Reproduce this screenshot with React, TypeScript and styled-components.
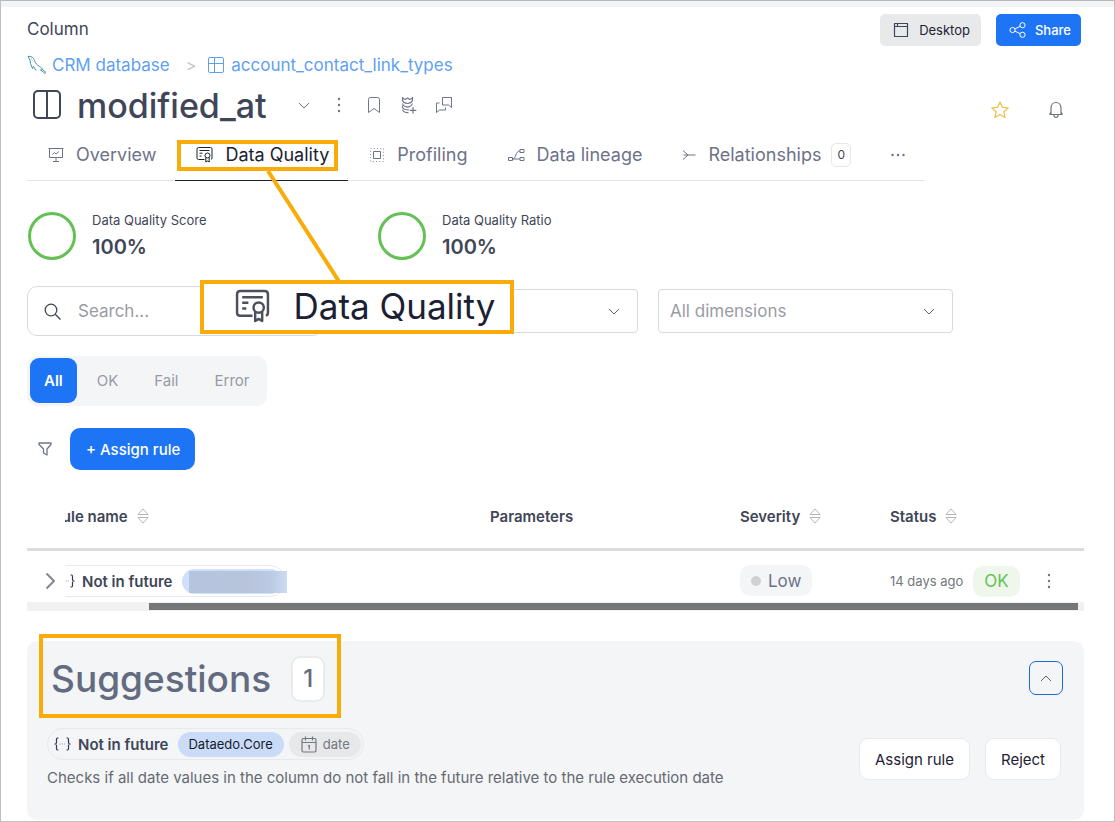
import React from "react";
import styled, { createGlobalStyle } from "styled-components";

const GlobalStyle = createGlobalStyle`
  *, *::before, *::after { box-sizing: border-box; }
  body { margin: 0; background: #fff; }
  body, button, input, select, table {
    font-family: Inter, "Liberation Sans", sans-serif;
    color: #3f4657;
  }
  button { margin: 0; padding: 0; border: 0; background: none; cursor: pointer; }
  h1, h2, p { margin: 0; }
  svg { display: block; flex: none; }
`;

/* ---------- page ---------- */

const Page = styled.main`
  min-height: 100vh;
  border: 1px solid #bfbfbf;
  border-top-color: #b8b8b8;
`;

const TopStrip = styled.div`
  height: 6px;
  background: #f3f4f6;
`;

const Content = styled.div`
  padding: 7px 30px 0 26px;
`;

const HeaderRow = styled.header`
  display: flex;
  align-items: flex-start;
  justify-content: space-between;
  height: 32px;
  padding-right: 3px;
`;

const Kind = styled.span`
  font-size: 17px;
  line-height: 30px;
`;

const HeaderActions = styled.div`
  display: flex;
  gap: 15px;
`;

const HeaderButton = styled.button<{ $primary?: boolean }>`
  display: flex;
  align-items: center;
  height: 32px;
  gap: ${(p) => (p.$primary ? 9 : 10)}px;
  padding: 0 ${(p) => (p.$primary ? 10 : 11)}px 0 13px;
  border-radius: 5px;
  font-size: 13px;
  font-weight: ${(p) => (p.$primary ? 500 : 400)};
  color: ${(p) => (p.$primary ? "#fff" : "#1d2233")};
  background: ${(p) => (p.$primary ? "#1d74f5" : "#e8e9eb")};
`;

const Breadcrumb = styled.nav`
  display: flex;
  align-items: center;
  height: 24px;
  margin-top: 7px;
  font-size: 17px;
  line-height: 24px;
`;

const Crumb = styled.a<{ $gap: number }>`
  display: flex;
  align-items: center;
  gap: ${(p) => p.$gap}px;
  color: #5f9ff2;
  text-decoration: none;
`;

const CrumbSeparator = styled.span`
  padding: 0 12px 0 16px;
  font-size: 16px;
  color: #c4c6cb;
`;

const TitleRow = styled.div`
  display: flex;
  align-items: center;
  height: 40px;
  margin: 8px 0 4px;
  padding: 0 19px 0 5px;
`;

const Title = styled.h1`
  margin: 0 28px 0 15px;
  padding-top: 2px;
  font-size: 34px;
  line-height: 44px;
  font-weight: 500;
  color: #3f4657;
`;

const IconGroup = styled.div<{ $gap: number; $end?: boolean }>`
  display: flex;
  align-items: center;
  gap: ${(p) => p.$gap}px;
  margin-left: ${(p) => (p.$end ? "auto" : "0")};
  padding-top: ${(p) => (p.$end ? 10 : 0)}px;
`;

const IconButton = styled.button`
  display: flex;
  align-items: center;
  justify-content: center;
  min-width: 18px;
  height: 20px;
  color: #6f748a;
`;

/* ---------- tabs ---------- */

const Tabs = styled.nav`
  display: inline-flex;
  height: 52px;
  border-bottom: 1px solid #e3e4e6;
`;

const TabItem = styled.div`
  position: relative;
`;

const Tab = styled.button<{ $active?: boolean }>`
  display: flex;
  align-items: center;
  gap: 12px;
  height: 52px;
  padding: 0 19px 0 21px;
  font-size: 18px;
  color: ${(p) => (p.$active ? "#1b2033" : "#6d7289")};
  border-bottom: 1px solid ${(p) => (p.$active ? "#1b2033" : "transparent")};
  white-space: nowrap;
`;

const TabCount = styled.span`
  margin-left: -2px;
  width: 20px;
  height: 24px;
  line-height: 22px;
  font-size: 12px;
  text-align: center;
  color: #3f4657;
  border: 1px solid #e6e7ea;
  border-radius: 5px;
`;

/* ---------- callouts ---------- */

const TabFrame = styled.div`
  position: absolute;
  left: 2px;
  top: 11px;
  width: 161px;
  height: 31px;
  border: 4px solid #f9ab0a;
  pointer-events: none;
`;

const Leader = styled.svg`
  position: absolute;
  left: 88px;
  top: 42px;
  pointer-events: none;
`;

const Magnifier = styled.div`
  position: absolute;
  z-index: 2;
  left: 25px;
  top: 151px;
  display: flex;
  align-items: center;
  gap: 23px;
  width: 314px;
  height: 54px;
  padding: 0 0 3px 31px;
  border: 4px solid #f9ab0a;
  background: #fff;
  font-size: 35px;
  line-height: 44px;
  color: #1b2033;
  white-space: nowrap;

  svg { color: #4c505e; }
`;

const HeadingFrame = styled.div`
  position: absolute;
  left: 12px;
  top: -7px;
  width: 302px;
  height: 84px;
  border: 4px solid #f9ab0a;
  pointer-events: none;
`;

/* ---------- scores and filters ---------- */

const Scores = styled.section`
  display: flex;
  margin-top: 31px;
  padding-left: 1px;
`;

const Score = styled.div`
  display: flex;
  gap: 16px;
  width: 350px;
`;

const Ring = styled.div`
  width: 48px;
  height: 48px;
  border: 3px solid #65c155;
  border-radius: 50%;
`;

const ScoreLabel = styled.div`
  font-size: 13px;
  line-height: 16px;
`;

const ScoreValue = styled.div`
  margin-top: 6px;
  font-size: 20px;
  line-height: 26px;
  font-weight: 600;
`;

const Filters = styled.form`
  display: flex;
  align-items: center;
  gap: 20px;
  margin-top: 26px;
`;

const SearchBox = styled.label`
  display: flex;
  align-items: center;
  gap: 17px;
  flex: 0 1 296px;
  min-width: 0;
  height: 50px;
  padding-left: 16px;
  border: 1px solid #d9dadd;
  border-radius: 10px;
  color: #3f4657;

  input {
    flex: 1;
    min-width: 0;
    padding: 0;
    border: 0;
    outline: 0;
    background: none;
    font-size: 17px;
  }
  input::placeholder { color: #999ca3; opacity: 1; }
`;

const SelectBox = styled.label`
  display: grid;
  align-items: center;
  flex: 0 1 295px;
  min-width: 0;
  color: #5a5f6b;

  select, svg { grid-area: 1 / 1; }
  svg { justify-self: end; margin-right: 18px; pointer-events: none; }
  select {
    appearance: none;
    width: 100%;
    height: 44px;
    padding: 0 40px 0 11px;
    border: 1px solid #d9dadd;
    border-radius: 4px;
    background: #fff;
    font-size: 17px;
    color: #999ca3;
  }
`;

const Segments = styled.div`
  display: inline-flex;
  margin-top: 20px;
  height: 50px;
  padding: 2px 0 2px 3px;
  border-radius: 10px;
  background: #f3f5f7;
`;

const Segment = styled.button<{ $active?: boolean }>`
  height: 45px;
  margin-right: ${(p) => (p.$active ? 2 : 0)}px;
  padding: 0 ${(p) => (p.$active ? 14 : 18)}px;
  border-radius: 9px;
  font-size: 15px;
  font-weight: ${(p) => (p.$active ? 600 : 400)};
  color: ${(p) => (p.$active ? "#fff" : "#989ba3")};
  background: ${(p) => (p.$active ? "#1d74f5" : "transparent")};
`;

const Toolbar = styled.div`
  display: flex;
  align-items: center;
  gap: 16px;
  margin-top: 22px;
  padding-left: 9px;
`;

const PrimaryButton = styled.button`
  height: 42px;
  padding: 0 15px 0 16px;
  border-radius: 10px;
  font-size: 15px;
  font-weight: 500;
  color: #fff;
  background: #1d74f5;
`;

/* ---------- rules table ---------- */

const Table = styled.table`
  width: 100%;
  margin-top: 14px;
  border-collapse: separate;
  border-spacing: 0;
  table-layout: fixed;
`;

const HeadCell = styled.th<{ $width?: number }>`
  width: ${(p) => (p.$width ? `${p.$width}px` : "auto")};
  height: 67px;
  padding: 0;
  border-bottom: 3px solid #dcdcdc;
  overflow: hidden;
  text-align: left;
  font-size: 15px;
  font-weight: 600;
  color: #3f4657;
`;

const HeadLabel = styled.div<{ $scrolled?: boolean }>`
  display: flex;
  align-items: center;
  gap: 9px;
  margin-left: ${(p) => (p.$scrolled ? -13 : 0)}px;
`;

const Cell = styled.td`
  height: 51px;
  padding: 14px 0 5px;
  overflow: hidden;
  vertical-align: top;
`;

const CellRow = styled.div<{ $pad?: number }>`
  display: flex;
  align-items: center;
  height: 32px;
  padding-left: ${(p) => p.$pad ?? 0}px;
`;

const RulePill = styled.div<{ $scrolled?: boolean }>`
  display: inline-flex;
  align-items: center;
  height: 32px;
  margin-left: ${(p) => (p.$scrolled ? -14 : 0)}px;
  padding: 0 2px 0 6px;
  border: 1px solid #e8e9eb;
  border-radius: 16px;
  font-size: 15px;
  font-weight: 600;
  white-space: nowrap;
`;

const RuleLabel = styled.span`
  margin: 0 10px 0 7px;
`;

const Chip = styled.span<{ $tone: "blue" | "grey" }>`
  display: flex;
  align-items: center;
  gap: 6px;
  height: 25px;
  padding: 0 11px 0 10px;
  border-radius: 13px;
  font-size: 13px;
  font-weight: 400;
  color: ${(p) => (p.$tone === "blue" ? "#161b2b" : "#73777f")};
  background: ${(p) => (p.$tone === "blue" ? "#cadbf8" : "#e7e8ea")};

  & + & { margin-left: 5px; padding-left: 12px; }
`;

const HiddenChip = styled.span`
  display: block;
  width: 101px;
  height: 25px;
  padding: 2px 0 0 7px;
  border-radius: 13px;
  background: #cfe0fc;
`;

const Mask = styled.span`
  display: block;
  width: 98px;
  height: 22px;
  background: linear-gradient(90deg, #b6c5de 0%, #b7c4dc 60%, #bccbe6 85%, #cddaf3 100%);
`;

const Severity = styled.span`
  display: inline-flex;
  align-items: center;
  gap: 7px;
  height: 31px;
  padding: 0 11px;
  border-radius: 10px;
  font-size: 17px;
  color: #6d7289;
  background: #f3f5f7;

  &::before {
    content: "";
    width: 10px;
    height: 10px;
    border-radius: 50%;
    background: #d0d1d5;
  }
`;

const Age = styled.span`
  font-size: 13px;
  color: #73777f;
`;

const StatusBadge = styled.span`
  margin-left: 10px;
  height: 31px;
  padding: 0 11px;
  border-radius: 10px;
  font-size: 17px;
  line-height: 31px;
  color: #65c155;
  background: #eff7ed;
`;

const ScrollTrack = styled.div`
  height: 9px;
  padding: 1px 6px 1px 122px;
  background: #f1f1f1;
`;

const ScrollThumb = styled.div`
  height: 7px;
  background: #757677;
`;

/* ---------- suggestions ---------- */

const Panel = styled.section`
  position: relative;
  margin-top: 30px;
  padding: 15px 21px 30px 20px;
  border-radius: 10px;
  background: #f3f5f7;
`;

const PanelHead = styled.div`
  display: flex;
  align-items: center;
  justify-content: space-between;
  height: 46px;
  padding-left: 4px;
`;

const PanelTitle = styled.h2`
  display: flex;
  align-items: center;
  gap: 20px;
  font-size: 37px;
  line-height: 46px;
  font-weight: 500;
  color: #636b80;
`;

const PanelCount = styled.span`
  width: 34px;
  height: 46px;
  line-height: 42px;
  font-size: 24px;
  text-align: center;
  border: 2px solid #eaebed;
  border-radius: 9px;
  background: #fff;
`;

const CollapseButton = styled.button`
  display: flex;
  align-items: center;
  justify-content: center;
  width: 34px;
  height: 34px;
  margin-top: -2px;
  border: 1px solid #1f68d8;
  border-radius: 7px;
  color: #5a5f6b;
`;

const PanelBody = styled.div`
  display: flex;
  align-items: center;
  justify-content: space-between;
  margin-top: 26px;
  padding-right: 2px;
`;

const Description = styled.p`
  margin-top: 6px;
  font-size: 15px;
  line-height: 24px;
  color: #666a70;
`;

const PanelActions = styled.div`
  display: flex;
  gap: 15px;
`;

const SecondaryButton = styled.button`
  height: 42px;
  padding: 0 15px;
  border: 1px solid #e8e9eb;
  border-radius: 9px;
  font-size: 15px;
  font-weight: 400;
  color: #1d2233;
  background: #fff;
`;

/* ---------- icons ---------- */

type IconProps = {
  w: number;
  h: number;
  box?: string;
  sw?: number;
  color?: string;
  children: React.ReactNode;
};

const Icon = ({ w, h, box, sw = 1, color = "currentColor", children }: IconProps) => (
  <svg
    width={w}
    height={h}
    viewBox={box ?? `0 0 ${w} ${h}`}
    fill="none"
    stroke={color}
    strokeWidth={sw}
    strokeLinejoin="round"
    aria-hidden="true"
  >
    {children}
  </svg>
);

const Chevron = ({ up = false }: { up?: boolean }) => (
  <Icon w={12} h={7}>
    <path d={up ? "M1 6L6 1L11 6" : "M1 1L6 6L11 1"} />
  </Icon>
);

const Kebab = () => (
  <Icon w={4} h={16}>
    <g fill="currentColor" stroke="none">
      <circle cx="2" cy="2" r="1.2" />
      <circle cx="2" cy="8" r="1.2" />
      <circle cx="2" cy="14" r="1.2" />
    </g>
  </Icon>
);

const CertificateIcon = ({ size, sw = 1 }: { size: number; sw?: number }) => (
  <Icon w={size} h={size} box="0 0 17 17" sw={sw}>
    <path d="M8.5 13.5H2.6Q1 13.5 1 11.9V3.1Q1 1.5 2.6 1.5H14.4Q16 1.5 16 3.1V11.9Q16 13.2 15 13.4" />
    <path d="M3.5 4.5H13.5M3.5 7.2H6.5M3.5 10H5.5" />
    <circle cx="11.5" cy="9.5" r="2.5" />
    <path d="M9.8 11.5V16L11.5 15L13.2 16V11.5" />
  </Icon>
);

const SortIcon = () => (
  <Icon w={12} h={16} color="#b4b6bb">
    <path d="M1 6.500L6 1L11 6.500ZM1 9.500L6 15L11 9.500Z" />
  </Icon>
);

const BracesIcon = () => (
  <Icon w={17} h={14} color="#33394a" sw={1.2}>
    <path d="M4.5 1H3.5Q2.5 1 2.5 2.5V5.5Q2.5 7 1 7Q2.5 7 2.5 8.5V11.5Q2.5 13 3.5 13H4.5" />
    <path d="M12.5 1H13.5Q14.5 1 14.5 2.5V5.5Q14.5 7 16 7Q14.5 7 14.5 8.5V11.5Q14.5 13 13.5 13H12.5" />
    <path d="M5.5 7H11.5" stroke="#9a9da5" strokeDasharray="1 1.2" />
  </Icon>
);

const Sortable = ({ label, scrolled }: { label: string; scrolled?: boolean }) => (
  <HeadLabel $scrolled={scrolled}>
    {label}
    <SortIcon />
  </HeadLabel>
);

export default function App() {
  return (
    <>
      <GlobalStyle />
      <Page>
        <TopStrip />
        <Content>
          <HeaderRow>
            <Kind>Column</Kind>
            <HeaderActions>
              <HeaderButton type="button">
                <Icon w={16} h={16} color="#3f4657" sw={1.2}>
                  <path d="M1.5 1.5H14.5V14.5H1.5ZM1.5 4.5H14.5M4.5 1.5V4.5" />
                </Icon>
                Desktop
              </HeaderButton>
              <HeaderButton type="button" $primary>
                <Icon w={17} h={16}>
                  <circle cx="3.5" cy="8" r="2.6" />
                  <circle cx="13.5" cy="3.2" r="2.6" />
                  <circle cx="13.5" cy="12.8" r="2.6" />
                  <path d="M5.9 6.9L11.2 4.3M5.9 9.1L11.2 11.7" />
                </Icon>
                Share
              </HeaderButton>
            </HeaderActions>
          </HeaderRow>

          <Breadcrumb aria-label="Breadcrumb">
            <Crumb href="#database" $gap={5}>
              <Icon w={20} h={20} color="#4290a4">
                <path d="M1 1.5C4 .8 6.5 2.5 7.500 5.500C8.500 8.500 10 10 12.500 11.500C14.500 12.700 15.500 14 15.500 14.500L13.500 15L16.500 17L18.500 19" />
                <path d="M1 1.500L3 5L3.500 8.500L5.500 13.500L6.500 11.500L9 15.500" />
                <path d="M15.500 14.500L19 17.500" />
                <path d="M4.500 4L5.200 4.600" />
              </Icon>
              CRM database
            </Crumb>
            <CrumbSeparator>&gt;</CrumbSeparator>
            <Crumb href="#table" $gap={7}>
              <Icon w={16} h={16}>
                <rect x=".5" y=".5" width="15" height="15" rx="1.5" />
                <path d="M.5 6.500H15.500M6.500 .5V15.500" />
              </Icon>
              account_contact_link_types
            </Crumb>
          </Breadcrumb>

          <TitleRow>
            <Icon w={30} h={30} color="#3f4657" sw={2}>
              <rect x="2" y="1" width="26" height="27" rx="4" />
              <path d="M15 1V28" />
            </Icon>
            <Title>modified_at</Title>
            <IconGroup $gap={17}>
              <IconButton type="button" aria-label="Show details">
                <Chevron />
              </IconButton>
              <IconButton type="button" aria-label="More actions">
                <Kebab />
              </IconButton>
              <IconButton type="button" aria-label="Bookmark">
                <Icon w={14} h={18}>
                  <path d="M1.500 16.500V3.500Q1.500 1.500 3.500 1.500H10.500Q12.500 1.500 12.500 3.500V16.500L7 12.500Z" />
                </Icon>
              </IconButton>
              <IconButton type="button" aria-label="Follow">
                <Icon w={16} h={18} sw={1.2}>
                  <path d="M1.500 1.500Q2.500 3.500 4.500 3.300L6.500 2L8.500 3.300Q10.500 3.500 11.500 1.500V4.500Q10 7.500 6.500 7.500Q3 7.500 1.500 4.500Z" />
                  <path d="M1.500 7.500Q2 10 6.500 11.200Q11 10 11.500 7.500M1.500 9.500V11.500Q3 14 8 14M1.500 13.500Q2 16.500 7.500 16.800" />
                  <path d="M12 11V17.500M8.800 14.300H15.300" />
                </Icon>
              </IconButton>
              <IconButton type="button" aria-label="Comments">
                <Icon w={18} h={18}>
                  <path d="M7.500 1.500H16.500V11.500L13.500 9H7.500Z" />
                  <path d="M4.500 7H1.500V16.500L4.500 14H10.500V11.500" />
                </Icon>
              </IconButton>
            </IconGroup>
            <IconGroup $gap={38} $end>
              <IconButton type="button" aria-label="Add to favourites">
                <Icon w={18} h={18} color="#efbd4b" sw={1.2}>
                  <path d="M9 1L11.400 6.300L17.200 6.900L12.900 10.800L14.100 16.500L9 13.600L3.900 16.500L5.100 10.800L.8 6.900L6.600 6.300Z" />
                </Icon>
              </IconButton>
              <IconButton type="button" aria-label="Notifications">
                <Icon w={16} h={18} sw={1.2}>
                  <path d="M1.500 13.500H14.500M3 13.500V7.500C3 4 5 1.500 8 1.500S13 4 13 7.500V13.500M3 11L1.500 13.500M13 11L14.500 13.500" />
                  <path d="M5.800 13.800Q6 16.500 8 16.500T10.200 13.800" />
                </Icon>
              </IconButton>
            </IconGroup>
          </TitleRow>

          <Tabs aria-label="Sections">
            <Tab type="button">
              <Icon w={16} h={16}>
                <path d="M.5 1.500H15.500M1.500 1.500V10.500H14.500V1.500M8 10.500V14.500M5 14.500H11" />
                <path d="M4.500 7.500L6.500 5.500L8 7L11 4.500" />
              </Icon>
              Overview
            </Tab>
            <TabItem>
              <Tab type="button" $active>
                <CertificateIcon size={17} />
                Data Quality
              </Tab>
              <TabFrame />
              <Leader width="80" height="112" viewBox="0 0 80 112" aria-hidden="true">
                <path d="M5 0L77 112" stroke="#f9ab0a" strokeWidth="4" />
              </Leader>
              <Magnifier>
                <CertificateIcon size={35} sw={1.2} />
                Data Quality
              </Magnifier>
            </TabItem>
            <Tab type="button">
              <Icon w={16} h={16}>
                <rect x="4.500" y="4.500" width="7" height="7" />
                <rect x="1.500" y="1.500" width="13" height="13" strokeDasharray="1 2.250" opacity=".8" />
              </Icon>
              Profiling
            </Tab>
            <Tab type="button">
              <Icon w={17} h={16}>
                <path d="M.5 10.500H4.500V13.500H.5ZM12 2.500H16V5.500H12ZM12 10.500H16V13.500H12ZM4.500 12H12M4.500 12C9 12 6.500 4 12 4" />
              </Icon>
              Data lineage
            </Tab>
            <Tab type="button">
              <Icon w={14} h={16}>
                <path d="M1 3.500L6 8L1 12.500M1.500 8H13.500" />
              </Icon>
              Relationships
              <TabCount>0</TabCount>
            </Tab>
            <Tab type="button" aria-label="More sections">
              <Icon w={14} h={4}>
                <g fill="currentColor" stroke="none">
                  <circle cx="1.500" cy="2" r="1.200" />
                  <circle cx="7" cy="2" r="1.200" />
                  <circle cx="12.500" cy="2" r="1.200" />
                </g>
              </Icon>
            </Tab>
          </Tabs>

          <Scores>
            {["Data Quality Score", "Data Quality Ratio"].map((label) => (
              <Score key={label}>
                <Ring />
                <div>
                  <ScoreLabel>{label}</ScoreLabel>
                  <ScoreValue>100%</ScoreValue>
                </div>
              </Score>
            ))}
          </Scores>

          <Filters>
            <SearchBox>
              <Icon w={17} h={17} sw={1.3}>
                <circle cx="7" cy="7" r="5.800" />
                <path d="M11.200 11.200L16.500 16.500" />
              </Icon>
              <input type="search" placeholder="Search..." aria-label="Search rules" />
            </SearchBox>
            <SelectBox>
              <select aria-label="Rule source">
                <option></option>
              </select>
              <Chevron />
            </SelectBox>
            <SelectBox>
              <select aria-label="Dimension">
                <option>All dimensions</option>
              </select>
              <Chevron />
            </SelectBox>
          </Filters>

          <Segments>
            <Segment type="button" $active>
              All
            </Segment>
            <Segment type="button">OK</Segment>
            <Segment type="button">Fail</Segment>
            <Segment type="button">Error</Segment>
          </Segments>

          <Toolbar>
            <IconButton type="button" aria-label="Filter">
              <Icon w={14} h={14} sw={1.3}>
                <path d="M1 1H13V2.500L9 7V13L5.500 11V7L1 2.500Z" />
              </Icon>
            </IconButton>
            <PrimaryButton type="button">+ Assign rule</PrimaryButton>
          </Toolbar>

          <Table>
            <thead>
              <tr>
                <HeadCell $width={38} aria-label="Expand" />
                <HeadCell>
                  <Sortable label="Rule name" scrolled />
                </HeadCell>
                <HeadCell $width={250}>Parameters</HeadCell>
                <HeadCell $width={150}>
                  <Sortable label="Severity" />
                </HeadCell>
                <HeadCell $width={194}>
                  <Sortable label="Status" />
                </HeadCell>
              </tr>
            </thead>
            <tbody>
              <tr>
                <Cell>
                  <CellRow $pad={14}>
                    <IconButton type="button" aria-label="Expand row">
                      <Icon w={11} h={18} sw={2} color="#85888f">
                        <path d="M1.500 1.500L9 9L1.500 16.500" />
                      </Icon>
                    </IconButton>
                  </CellRow>
                </Cell>
                <Cell>
                  <RulePill $scrolled>
                    <BracesIcon />
                    <RuleLabel>Not in future</RuleLabel>
                    <HiddenChip>
                      <Mask />
                    </HiddenChip>
                  </RulePill>
                </Cell>
                <Cell />
                <Cell>
                  <Severity>Low</Severity>
                </Cell>
                <Cell>
                  <CellRow>
                    <Age>14 days ago</Age>
                    <StatusBadge>OK</StatusBadge>
                    <CellRow $pad={20}>
                      <IconButton type="button" aria-label="Rule actions">
                        <Kebab />
                      </IconButton>
                    </CellRow>
                  </CellRow>
                </Cell>
              </tr>
            </tbody>
          </Table>
          <ScrollTrack>
            <ScrollThumb />
          </ScrollTrack>

          <Panel>
            <HeadingFrame />
            <PanelHead>
              <PanelTitle>
                Suggestions
                <PanelCount>1</PanelCount>
              </PanelTitle>
              <CollapseButton type="button" aria-label="Collapse suggestions">
                <Chevron up />
              </CollapseButton>
            </PanelHead>
            <PanelBody>
              <div>
                <RulePill>
                  <BracesIcon />
                  <RuleLabel>Not in future</RuleLabel>
                  <Chip $tone="blue">Dataedo.Core</Chip>
                  <Chip $tone="grey">
                    <Icon w={16} h={17} sw={1.200}>
                      <rect x="1" y="2.500" width="14" height="13.500" rx="1.500" />
                      <path d="M1 6.500H15M4.500 .5V4.500M11.500 .5V4.500M7 10L8.300 9.300V13.500" />
                    </Icon>
                    date
                  </Chip>
                </RulePill>
                <Description>
                  Checks if all date values in the column do not fall in the future relative to the rule
                  execution date
                </Description>
              </div>
              <PanelActions>
                <SecondaryButton type="button">Assign rule</SecondaryButton>
                <SecondaryButton type="button">Reject</SecondaryButton>
              </PanelActions>
            </PanelBody>
          </Panel>
        </Content>
      </Page>
    </>
  );
}
